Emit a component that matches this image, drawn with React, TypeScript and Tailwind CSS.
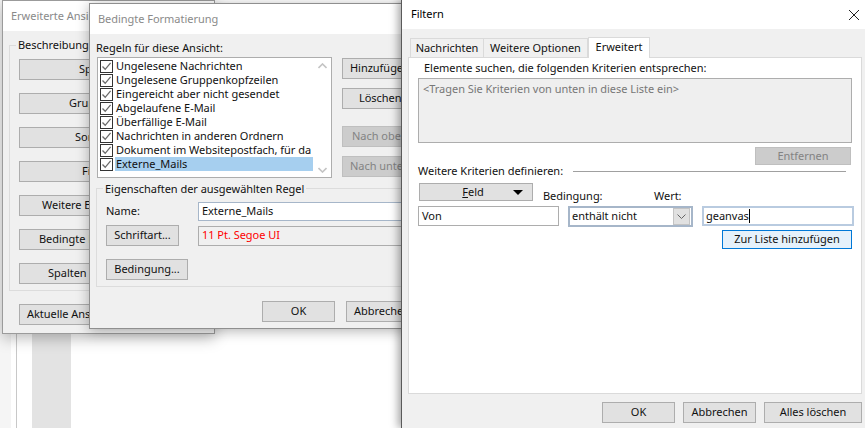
const font = "font-['Noto_Sans',sans-serif] text-[11px] tracking-[-0.03px]";

function Btn({ label, disabled, className = "" }: { label: React.ReactNode; disabled?: boolean; className?: string }) {
  return (
    <div
      className={`flex shrink-0 items-center whitespace-nowrap border ${disabled ? "border-[#bfbfbf] bg-[#cccccc] text-[#838383]" : "border-[#adadad] bg-[#e1e1e1] text-[#111111]"} ${className}`}
    >
      {label}
    </div>
  );
}

function Row({ label, selected }: { label: string; selected?: boolean }) {
  return (
    <div className="flex h-[14px] items-center pl-[2px]">
      <div className="flex h-[13px] w-[13px] shrink-0 items-center justify-center border border-[#333333] bg-white">
        <svg width="11" height="11" viewBox="0 0 11 11" fill="none">
          <path d="M1.5 5.5 L4.2 8.3 L9.6 1.8" stroke="#6b6b6b" strokeWidth="1.3" />
        </svg>
      </div>
      <div className={`ml-[2px] flex h-[14px] w-[198px] items-center whitespace-nowrap pl-px ${selected ? "bg-[#a6cfef]" : ""}`}>{label}</div>
    </div>
  );
}

const rules = [
  "Ungelesene Nachrichten",
  "Ungelesene Gruppenkopfzeilen",
  "Eingereicht aber nicht gesendet",
  "Abgelaufene E-Mail",
  "Überfällige E-Mail",
  "Nachrichten in anderen Ordnern",
  "Dokument im Websitepostfach, für da",
];

const leftBase = "h-[21px] w-[180px]";

export default function App() {
  return (
    <div className={`relative h-[428px] w-[865px] overflow-hidden bg-white text-[#111111] ${font}`}>
      {/* Backdrop */}
      <div className="flex h-full">
        <div className="w-[11px] bg-[#f5f5f5]" />
        <div className="w-[5px]" />
        <div className="w-px bg-[#c8c8c8]" />
        <div className="w-[15px]" />
        <div className="w-[39px] bg-[#e3e3e3]" />
      </div>

      {/* Erweiterte Ansicht */}
      <div className="absolute left-[2px] top-0 flex h-[334px] w-[213px] flex-col border border-[#9b9b9b] bg-[#f0f0f0] shadow-[0_4px_14px_rgba(0,0,0,0.28)]">
        <div className="flex h-[30px] shrink-0 items-center bg-white pl-[8px] pt-[1px] text-[#8a8a8a]">Erweiterte Ansi</div>
        <div className="relative ml-[6px] mt-[14px] flex h-[246px] w-[200px] flex-col gap-[13px] border border-[#dcdcdc] pl-[9px] pt-[13px]">
          <span className="absolute left-[6px] top-[-9px] bg-[#f0f0f0] px-[2px] leading-[16px]">Beschreibung</span>
          <Btn label="Sp" className={`${leftBase} pl-[59px]`} />
          <Btn label="Grup" className={`${leftBase} pl-[49px]`} />
          <Btn label="Sor" className={`${leftBase} pl-[55px]`} />
          <Btn label="Fi" className={`${leftBase} pl-[62px]`} />
          <Btn label="Weitere E" className={`${leftBase} pl-[22px]`} />
          <Btn label="Bedingte F" className={`${leftBase} pl-[19px]`} />
          <Btn label="Spalten" className={`${leftBase} pl-[28px]`} />
        </div>
        <Btn label="Aktuelle Ans" className="ml-[16px] mt-[13px] h-[21px] w-[180px] pl-[7px]" />
      </div>

      {/* Bedingte Formatierung */}
      <div className="absolute left-[89px] top-[3px] flex h-[326px] w-[320px] flex-col border border-[#8f8f8f] bg-[#f0f0f0] shadow-[0_2px_12px_rgba(0,0,0,0.3)]">
        <div className="flex h-[30px] shrink-0 items-center bg-white pl-[8px] text-[#8a8a8a]">Bedingte Formatierung</div>
        <div className="pl-[6px] pt-[6px]">
          <div className="h-[16px] leading-[16px]">Regeln für diese Ansicht:</div>
          <div className="mt-px flex">
            <div className="ml-px flex h-[121px] w-[235px] shrink-0 border border-[#adadad] bg-white pt-px">
              <div className="flex flex-col">
                {rules.map((r) => (
                  <Row key={r} label={r} />
                ))}
                <Row label="Externe_Mails" selected />
              </div>
              <div className="flex flex-1 flex-col items-center justify-between py-[4px]">
                <svg width="9" height="6" viewBox="0 0 9 6" fill="none"><path d="M0.5 5 L4.5 1 L8.5 5" stroke="#c4c4c4" strokeWidth="1.6" /></svg>
                <svg width="9" height="6" viewBox="0 0 9 6" fill="none"><path d="M0.5 1 L4.5 5 L8.5 1" stroke="#c4c4c4" strokeWidth="1.6" /></svg>
              </div>
            </div>
            <div className="ml-[10px] flex shrink-0 flex-col">
              <Btn label="Hinzufüge" className="mt-px h-[21px] w-[78px] pl-[7px]" />
              <Btn label="Löschen" className="mt-[9px] h-[21px] w-[78px] pl-[16px]" />
              <Btn label="Nach obe" disabled className="mt-[17px] h-[21px] w-[78px] pl-[9px]" />
              <Btn label="Nach unte" disabled className="mt-[9px] h-[21px] w-[78px] pl-[7px]" />
            </div>
          </div>
          <div className="relative mt-[10px] h-[99px] w-[312px] border border-[#dcdcdc] pl-[9px] pt-[13px]">
            <span className="absolute left-[6px] top-[-8px] bg-[#f0f0f0] px-[2px] leading-[16px]">Eigenschaften der ausgewählten Regel</span>
            <div className="flex h-[19px] items-center">
              <span className="w-[92px]">Name:</span>
              <div className="flex h-[19px] w-[204px] items-center border border-[#a6b6c9] bg-white pl-[3px]">Externe_Mails</div>
            </div>
            <div className="mt-[4px] flex items-center">
              <Btn label="Schriftart..." className="h-[21px] w-[73px] justify-center" />
              <div className="ml-[19px] flex h-[20px] w-[204px] items-center border border-[#adadad] pl-[3px] text-[#ff0000]">11 Pt. Segoe UI</div>
            </div>
            <Btn label="Bedingung..." className="mt-[13px] h-[21px] w-[82px] justify-center" />
          </div>
          <div className="mt-[14px] flex pl-[166px]">
            <Btn label="OK" className="h-[21px] w-[73px] justify-center" />
            <Btn label="Abbreche" className="ml-[11px] h-[21px] w-[73px] pl-[7px]" />
          </div>
        </div>
      </div>

      {/* Filtern */}
      <div className="absolute left-[401px] top-0 flex h-[428px] w-[464px] flex-col border-l border-[#5a5a5a] bg-[#f0f0f0] shadow-[-3px_0_8px_rgba(0,0,0,0.35)]">
        <div className="flex h-[29px] shrink-0 items-center justify-between bg-white pl-[9px] pr-[5px] text-black">
          <span>Filtern</span>
          <svg width="12" height="12" viewBox="0 0 12 12" fill="none"><path d="M1 1 L11 11 M11 1 L1 11" stroke="#222222" strokeWidth="1" /></svg>
        </div>
        <div className="flex h-[28px] items-end pl-[8px]">
          <div className="flex h-[19px] w-[74px] items-center justify-center border border-b-0 border-[#dadada] bg-[#f0f0f0]">Nachrichten</div>
          <div className="flex h-[19px] w-[104px] items-center justify-center border border-b-0 border-l-0 border-[#dadada] bg-[#f0f0f0]">Weitere Optionen</div>
          <div className="z-10 -mb-px flex h-[21px] w-[62px] items-center justify-center border border-b-0 border-[#dadada] bg-white pb-[2px]">Erweitert</div>
        </div>
        <div className="ml-[6px] flex h-[337px] w-[454px] flex-col border border-[#dadada] bg-white pl-[9px]">
          <div className="ml-[6px] mt-[2px] h-[16px] leading-[16px]">Elemente suchen, die folgenden Kriterien entsprechen:</div>
          <div className="mt-[2px] h-[65px] w-[434px] border border-[#adadad] bg-[#efefef] pl-[4px] pt-[2px] leading-[16px] text-[#777777]">&lt;Tragen Sie Kriterien von unten in diese Liste ein&gt;</div>
          <Btn label="Entfernen" disabled className="ml-[337px] mt-[4px] h-[18px] w-[96px] justify-center" />
          <div className="mt-[-1px] flex h-[15px] items-center">
            <span className="whitespace-nowrap">Weitere Kriterien definieren:</span>
            <div className="ml-[10px] h-px w-[273px] bg-[#a0a0a0]" />
          </div>
          <div className="mt-[4px] flex h-[20px]">
            <Btn
              className="relative ml-px h-[18px] w-[114px] justify-center"
              label={
                <>
                  <span className="mr-[6px]"><span className="underline">F</span>eld</span>
                  <svg className="absolute right-[9px] top-[6px]" width="10" height="5" viewBox="0 0 10 5"><path d="M0 0 H10 L5 5 Z" fill="#000000" /></svg>
                </>
              }
            />
            <span className="ml-[10px] mt-[5px] w-[111px] leading-[16px]">Bedingung:</span>
            <span className="mt-[5px] leading-[16px]">Wert:</span>
          </div>
          <div className="mt-[3px] flex items-start">
            <div className="flex h-[20px] w-[141px] items-center border border-[#adadad] pl-[3px]">Von</div>
            <div className="ml-[9px] flex h-[21px] w-[125px] items-center justify-between border-2 border-[#a6b6c9] pl-[2px] pr-px">
              <span>enthält nicht</span>
              <div className="flex h-[17px] w-[17px] items-center justify-center border border-[#c4c4c4] bg-[#e1e1e1]">
                <svg width="9" height="5" viewBox="0 0 9 5" fill="none"><path d="M0.5 0.5 L4.5 4.5 L8.5 0.5" stroke="#666666" /></svg>
              </div>
            </div>
            <div className="ml-[9px] flex h-[20px] w-[152px] items-center border-2 border-[#b9cbe0] pl-[2px]">
              <span>geanvas</span>
              <div className="h-[14px] w-[1.5px] bg-black" />
            </div>
          </div>
          <Btn label="Zur Liste hinzufügen" className="ml-[304px] mt-[3px] h-[19px] w-[130px] justify-center !border-[#0078d7] !bg-[#e5f1fb]" />
        </div>
        <div className="ml-[200px] mt-[8px] flex gap-[8px]">
          <Btn label="OK" className="h-[21px] w-[73px] justify-center" />
          <Btn label="Abbrechen" className="h-[21px] w-[73px] justify-center" />
          <Btn label="Alles löschen" className="h-[21px] w-[98px] justify-center" />
        </div>
      </div>
    </div>
  );
}
